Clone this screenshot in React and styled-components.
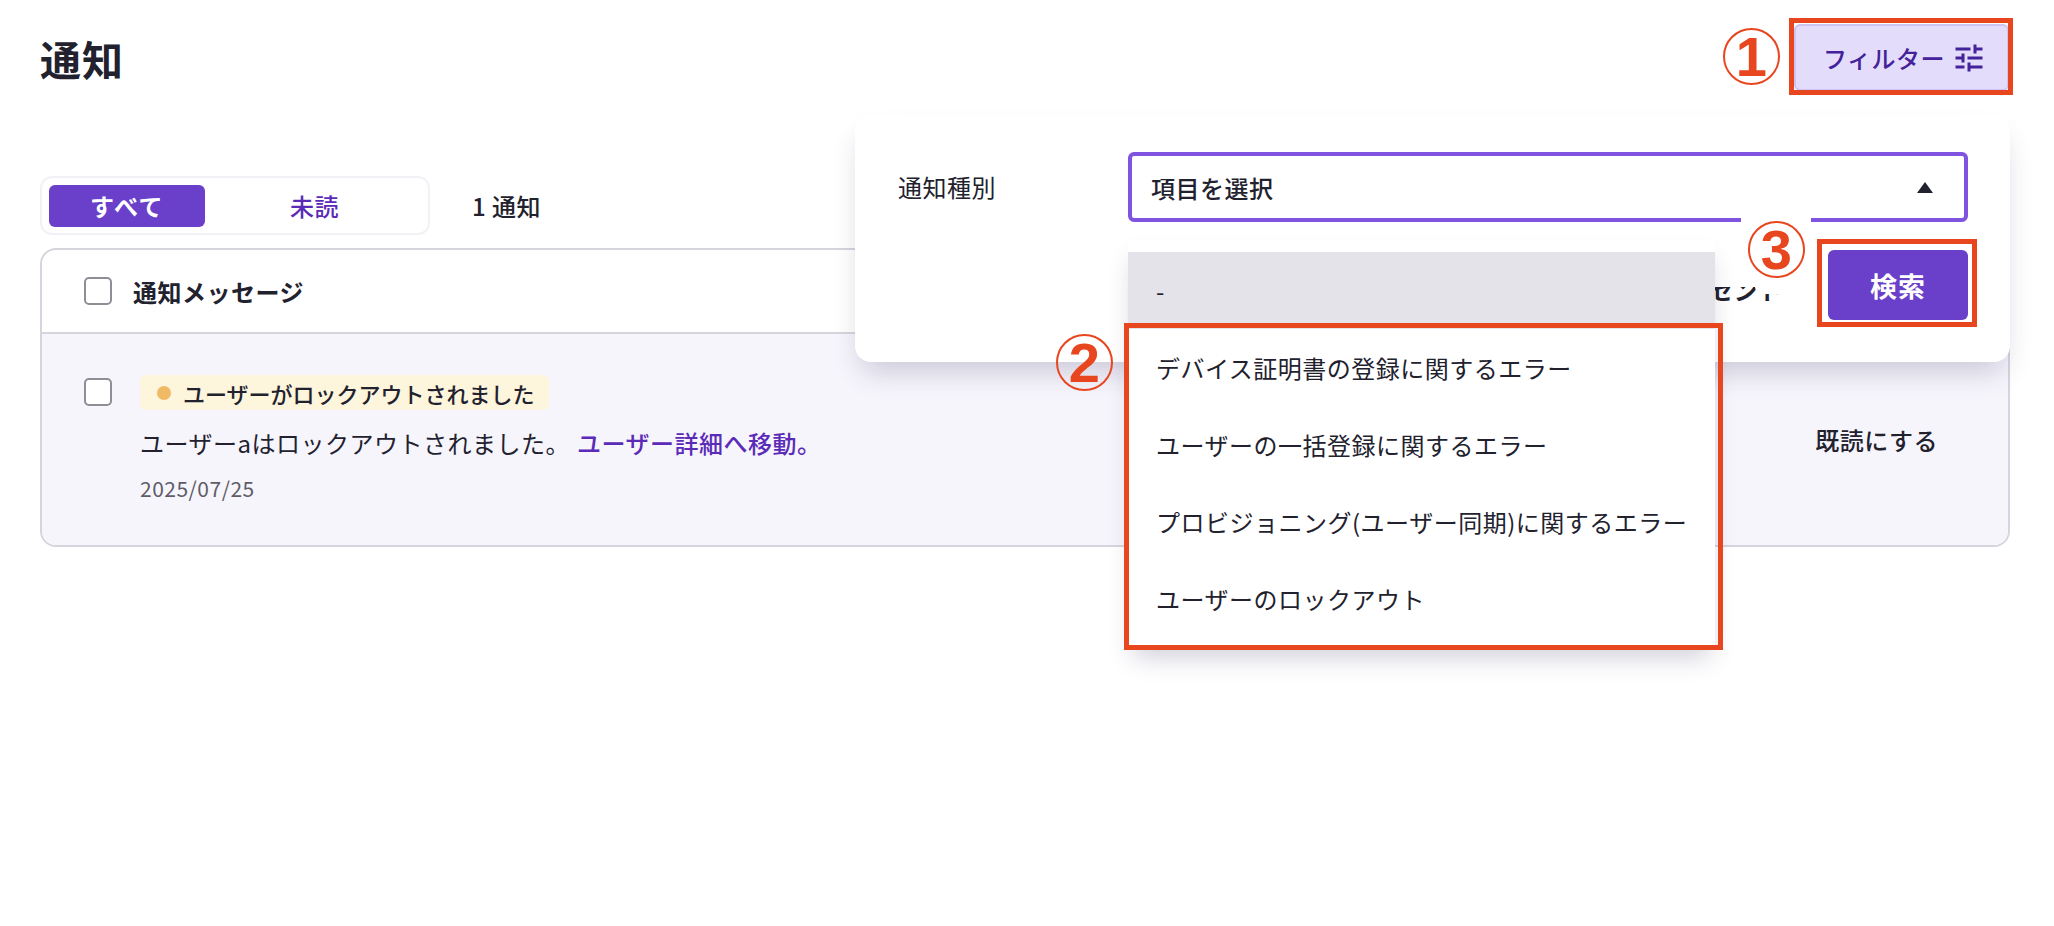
import React from 'react';
import styled, { createGlobalStyle } from 'styled-components';
import { MdTune } from 'react-icons/md';

const GlobalStyle = createGlobalStyle`
  html, body {
    margin: 0;
    padding: 0;
    background: #fff;
  }

  body {
    font-family: "Noto Sans CJK JP", "Noto Sans", sans-serif;
    font-size: 24px;
    letter-spacing: 0.5px;
    color: #22212e;
  }

  * {
    box-sizing: border-box;
  }
`;

const options = [
  'デバイス証明書の登録に関するエラー',
  'ユーザーの一括登録に関するエラー',
  'プロビジョニング(ユーザー同期)に関するエラー',
  'ユーザーのロックアウト',
];

const App = () => (
  <>
    <GlobalStyle />
    <Page>
      <Header>
        <Title>通知</Title>
        <FilterButton>
          フィルター
          <MdTune size={36} />
        </FilterButton>
      </Header>

      <ToolRow>
        <Tabs>
          <Tab $active>すべて</Tab>
          <Tab>未読</Tab>
        </Tabs>
        <Count>1 通知</Count>
      </ToolRow>

      <Card>
        <CardHeader>
          <Checkbox />
          <HeaderLabel>通知メッセージ</HeaderLabel>
        </CardHeader>
        <NoticeRow>
          <Checkbox $inRow />
          <NoticeBody>
            <Badge>
              <Dot />
              ユーザーがロックアウトされました
            </Badge>
            <Message>
              ユーザーaはロックアウトされました。
              <MessageLink>ユーザー詳細へ移動。</MessageLink>
            </Message>
            <NoticeDate>2025/07/25</NoticeDate>
          </NoticeBody>
          <ReadAction>既読にする</ReadAction>
        </NoticeRow>
      </Card>

      <Popover>
        <FormRow>
          <FieldLabel>通知種別</FieldLabel>
          <Select>
            項目を選択
            <Caret />
            <Dropdown>
              <Option $selected>-</Option>
              {options.map((option) => (
                <Option key={option}>{option}</Option>
              ))}
            </Dropdown>
          </Select>
        </FormRow>
        <Actions>
          <SearchButton>検索</SearchButton>
        </Actions>
        <CutLabel>セント</CutLabel>
      </Popover>

      <MarkMask />
      <Frame $x={1789} $y={18} $w={224} $h={77} />
      <Frame $x={1124} $y={323} $w={599} $h={327} />
      <Frame $x={1817} $y={239} $w={160} $h={88} />
      <Mark $x={1723} $y={28}>1</Mark>
      <Mark $x={1056} $y={334}>2</Mark>
      <Mark $x={1748} $y={221}>3</Mark>
    </Page>
  </>
);

export default App;

const Page = styled.div`
  position: relative;
  width: 2054px;
  min-height: 926px;
  padding: 24px 44px 0 40px;
  overflow: hidden;
`;

const Header = styled.header`
  display: flex;
  align-items: flex-start;
  justify-content: space-between;
`;

const Title = styled.h1`
  margin: 6px 0 0;
  font-size: 41px;
  line-height: 56px;
  font-weight: 700;
  letter-spacing: 1px;
`;

const FilterButton = styled.button`
  display: flex;
  align-items: center;
  gap: 6px;
  width: 215px;
  height: 67px;
  margin-right: 1px;
  padding: 0 0 0 27px;
  border: 2px solid #cfc3f3;
  border-radius: 6px;
  background: #e3dcfb;
  color: #43229a;
  font: 500 24px "Noto Sans CJK JP", sans-serif;
  letter-spacing: 0.5px;
`;

const ToolRow = styled.div`
  display: flex;
  align-items: center;
  gap: 42px;
  margin-top: 85px;
`;

const Tabs = styled.div`
  display: grid;
  grid-template-columns: 156px 1fr;
  align-items: start;
  width: 390px;
  height: 59px;
  padding: 7px 4px 0 7px;
  border: 2px solid #f2f1f5;
  border-radius: 12px;
`;

const Tab = styled.div`
  height: 42px;
  border-radius: 6px;
  background: ${(p) => (p.$active ? '#6a3fc9' : 'transparent')};
  color: ${(p) => (p.$active ? '#fff' : '#5b2bb8')};
  font-size: 24px;
  font-weight: ${(p) => (p.$active ? 700 : 500)};
  letter-spacing: ${(p) => (p.$active ? '1.5px' : '0.5px')};
  line-height: 42px;
  text-align: center;
`;

const Count = styled.div`
  font-weight: 500;
  line-height: 59px;
`;

const Card = styled.section`
  margin-top: 13px;
  border: 2px solid #d6d5dd;
  border-radius: 16px;
  overflow: hidden;
`;

const CardHeader = styled.div`
  display: flex;
  align-items: center;
  gap: 21px;
  height: 84px;
  padding-left: 42px;
  border-bottom: 2px solid #d6d5dd;
`;

const HeaderLabel = styled.div`
  font-weight: 700;
`;

const Checkbox = styled.span`
  flex: none;
  display: block;
  width: 28px;
  height: 28px;
  margin-top: ${(p) => (p.$inRow ? '3px' : '0')};
  border: 2px solid #8f8e96;
  border-radius: 5px;
  background: #fff;
`;

const NoticeRow = styled.div`
  display: flex;
  align-items: flex-start;
  gap: 28px;
  height: 211px;
  padding: 41px 70px 0 42px;
  background: #f6f5fc;
`;

const NoticeBody = styled.div`
  flex: 1;
`;

const Badge = styled.div`
  display: flex;
  align-items: center;
  gap: 12px;
  width: fit-content;
  height: 35px;
  padding: 0 14px 0 17px;
  border-radius: 6px;
  background: #fdf5dc;
  font-size: 22px;
  font-weight: 500;
  letter-spacing: 0;
`;

const Dot = styled.span`
  width: 14px;
  height: 14px;
  border-radius: 50%;
  background: #f0b964;
`;

const Message = styled.div`
  margin-top: 15px;
  line-height: 36px;
`;

const MessageLink = styled.a`
  margin-left: 7px;
  color: #5b2bb8;
  font-weight: 500;
`;

const NoticeDate = styled.div`
  margin-top: 12px;
  color: #5e5d68;
  font-size: 21px;
  line-height: 30px;
`;

const ReadAction = styled.div`
  align-self: center;
  margin-top: -41px;
  font-weight: 500;
`;

const Popover = styled.div`
  position: absolute;
  top: 115px;
  left: 855px;
  width: 1155px;
  height: 247px;
  padding: 37px 42px 0 43px;
  border-radius: 16px;
  background: #fff;
  box-shadow: 0 16px 28px -6px rgba(40, 30, 80, 0.2);
`;

const FormRow = styled.div`
  display: grid;
  grid-template-columns: 230px 1fr;
  align-items: center;
`;

const FieldLabel = styled.div`
  line-height: 36px;
`;

const Select = styled.div`
  position: relative;
  display: flex;
  align-items: center;
  justify-content: space-between;
  height: 70px;
  padding: 0 31px 0 19px;
  border: 4px solid #8054e0;
  border-radius: 6px;
  font-weight: 500;
`;

const Caret = styled.span`
  width: 0;
  height: 0;
  border-left: 8.5px solid transparent;
  border-right: 8.5px solid transparent;
  border-bottom: 11px solid #22212e;
`;

const Dropdown = styled.ul`
  position: absolute;
  z-index: 2;
  top: 84px;
  left: -4px;
  width: 587px;
  margin: 0;
  padding: 12px 0;
  list-style: none;
  background: #fff;
  box-shadow: 0 14px 24px -6px rgba(40, 30, 80, 0.22);
`;

const Option = styled.li`
  height: 77px;
  padding-left: 28px;
  background: ${(p) => (p.$selected ? '#e5e3ea' : 'transparent')};
  font-weight: 400;
  line-height: 77px;
  white-space: nowrap;
`;

const Actions = styled.div`
  display: flex;
  justify-content: flex-end;
  margin-top: 28px;
`;

const SearchButton = styled.button`
  width: 140px;
  height: 70px;
  border: 0;
  border-radius: 6px;
  background: #6a3fc9;
  color: #fff;
  font: 700 27px "Noto Sans CJK JP", sans-serif;
  letter-spacing: 1px;
`;

/* what the annotation left showing of a button label behind it */
const CutLabel = styled.div`
  position: absolute;
  top: 163px;
  left: 854px;
  width: 74px;
  height: 24px;
  clip-path: polygon(0 9px, 46px 9px, 48px 16px, 100% 16px, 100% 100%, 0 100%);
  font-weight: 700;
  line-height: 24px;
  white-space: nowrap;
`;

const MarkMask = styled.div`
  position: absolute;
  z-index: 3;
  top: 218px;
  left: 1741px;
  width: 70px;
  height: 61px;
  background: #fff;
`;

const Frame = styled.div`
  position: absolute;
  z-index: 4;
  top: ${(p) => p.$y}px;
  left: ${(p) => p.$x}px;
  width: ${(p) => p.$w}px;
  height: ${(p) => p.$h}px;
  border: 5px solid #e8461f;
  pointer-events: none;
`;

const Mark = styled.div`
  position: absolute;
  z-index: 4;
  top: ${(p) => p.$y}px;
  left: ${(p) => p.$x}px;
  display: flex;
  align-items: center;
  justify-content: center;
  width: 57px;
  height: 57px;
  border: 2px solid #e8461f;
  border-radius: 50%;
  color: #e8461f;
  font: 700 56px/1 "Liberation Sans", sans-serif;
`;
